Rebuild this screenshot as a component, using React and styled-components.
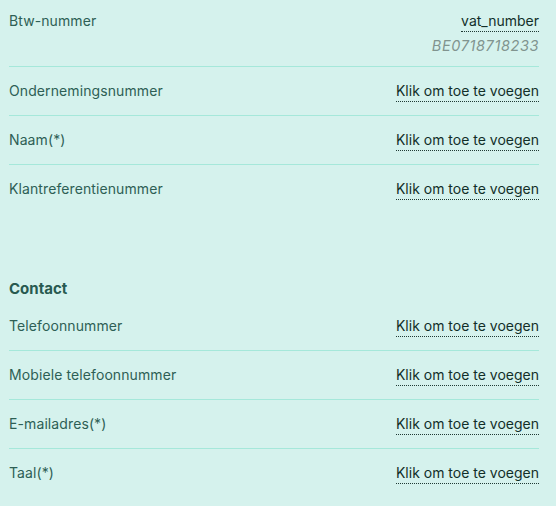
import React from "react";
import styled, { createGlobalStyle } from "styled-components";

const GlobalStyle = createGlobalStyle`
  html, body {
    margin: 0;
    padding: 0;
    background: #d5f2ed;
  }
  body {
    font-family: Inter, "Noto Sans", "Liberation Sans", sans-serif;
  }
`;

const companyFields = [
  { label: "Btw-nummer", value: "vat_number", hint: "BE0718718233" },
  { label: "Ondernemingsnummer" },
  { label: "Naam(*)" },
  { label: "Klantreferentienummer" },
];

const contactFields = [
  { label: "Telefoonnummer" },
  { label: "Mobiele telefoonnummer" },
  { label: "E-mailadres(*)" },
  { label: "Taal(*)" },
];

export default function App() {
  return (
    <>
      <GlobalStyle />
      <Page>
        <Section>
          {companyFields.map((f) => (
            <Field key={f.label} {...f} />
          ))}
        </Section>
        <Section $spaced>
          <SectionTitle>Contact</SectionTitle>
          {contactFields.map((f) => (
            <Field key={f.label} {...f} />
          ))}
        </Section>
      </Page>
    </>
  );
}

function Field({ label, value, hint }) {
  return (
    <Row>
      <Label>{label}</Label>
      <ValueStack>
        <Value href="#">{value || "Klik om toe te voegen"}</Value>
        {hint ? <Hint>{hint}</Hint> : null}
      </ValueStack>
    </Row>
  );
}

const Page = styled.div`
  box-sizing: border-box;
  width: 556px;
  min-height: 506px;
  padding: 0 17px 0 9px;
  background: #d5f2ed;
`;

const Section = styled.section`
  display: flex;
  flex-direction: column;
  margin-top: ${(props) => (props.$spaced ? "66px" : "0")};
`;

const SectionTitle = styled.h3`
  margin: 0 0 3px;
  font-size: 15px;
  line-height: 20px;
  font-weight: 700;
  color: #285a50;
`;

const Row = styled.div`
  display: flex;
  justify-content: space-between;
  align-items: flex-start;
  padding: 14px 0 13px;
  border-bottom: 1px solid #a5e8da;
  &:first-child {
    padding-top: 11px;
  }
  &:last-child {
    border-bottom: none;
  }
`;

const Label = styled.span`
  font-size: 14px;
  line-height: 20px;
  letter-spacing: 0.1px;
  color: #2e5f55;
`;

const ValueStack = styled.div`
  display: flex;
  flex-direction: column;
  align-items: flex-end;
`;

const Value = styled.a`
  display: inline-block;
  font-size: 14px;
  line-height: 20px;
  color: #122f29;
  text-decoration: none;
  border-bottom: 1px dotted #1f3a34;
`;

const Hint = styled.span`
  margin: 4px 0 -3px;
  font-size: 14.5px;
  line-height: 20px;
  letter-spacing: 0.6px;
  font-style: italic;
  color: #81948f;
`;
